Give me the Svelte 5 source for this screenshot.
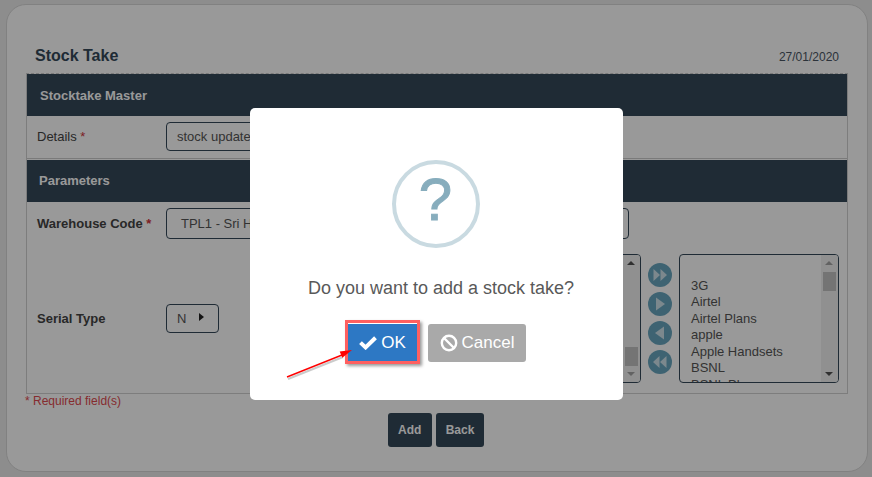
<script>
  const brands = ["3G", "Airtel", "Airtel Plans", "apple", "Apple Handsets", "BSNL", "BSNL Plans"];
  const moves = [
    "M5.5 6 L12 12 L5.5 18 Z M12.5 6 L19 12 L12.5 18 Z",
    "M8 5.5 L17 12 L8 18.5 Z",
    "M16 5.5 L7 12 L16 18.5 Z",
    "M18.5 6 L12 12 L18.5 18 Z M11.5 6 L5 12 L11.5 18 Z"
  ];
</script>

<div class="page">
  <div class="card">
    <div class="title-row">
      <h1>Stock Take</h1>
      <span class="date">27/01/2020</span>
    </div>

    <div class="form">
      <div class="section-head first">Stocktake Master</div>
      <div class="row details">
        <label for="details">Details <em>*</em></label>
        <div class="field wide" id="details">stock update</div>
      </div>

      <div class="section-head">Parameters</div>
      <div class="row warehouse">
        <label for="wh">Warehouse Code <em>*</em></label>
        <div class="field code" id="wh">TPL1 - Sri Hari</div>
      </div>
      <div class="row serial">
        <label for="serial">Serial Type</label>
        <div class="field small" id="serial">N<span class="caret"></span></div>
        <div class="picker">
          <div class="listbox left">
            <div class="scroll">
              <span class="up dark"></span>
              <span class="thumb low"></span>
              <span class="down"></span>
            </div>
          </div>
          <div class="moves">
            {#each moves as d}
              <svg width="24" height="24" viewBox="0 0 24 24">
                <circle cx="12" cy="12" r="12" fill="#68a6bf" />
                <path {d} fill="#cfe3ec" />
              </svg>
            {/each}
          </div>
          <div class="listbox right">
            <ul>
              {#each brands as b}
                <li>{b}</li>
              {/each}
            </ul>
            <div class="scroll">
              <span class="up"></span>
              <span class="thumb"></span>
              <span class="down dark"></span>
            </div>
          </div>
        </div>
      </div>
    </div>

    <p class="required">* Required field(s)</p>
    <div class="actions">
      <button type="button" class="add">Add</button>
      <button type="button">Back</button>
    </div>
  </div>

  <div class="overlay"></div>

  <div class="modal">
    <div class="q-icon">?</div>
    <p class="question">Do you want to add a stock take?</p>
    <div class="modal-actions">
      <span class="marked">
        <button type="button" class="ok">
          <svg class="check" width="18" height="14" viewBox="0 0 18 14">
            <path d="M1.5 6.6 L6.6 11.4 L16.5 1.8" fill="none" stroke="#fff" stroke-width="4" />
          </svg>
          OK
        </button>
      </span>
      <button type="button" class="cancel">
        <svg width="18" height="18" viewBox="0 0 18 18">
          <circle cx="9" cy="9" r="7.2" fill="none" stroke="#fff" stroke-width="2.4" />
          <path d="M4 4 L14 14" stroke="#fff" stroke-width="2.4" />
        </svg>
        Cancel
      </button>
    </div>
    <svg class="arrow" width="80" height="40" viewBox="0 0 80 40">
      <path d="M1 31 L56 9" stroke="#999" stroke-width="2" opacity="0.5" transform="translate(1 2)" />
      <path d="M1 31 L56 9" stroke="#f00" stroke-width="1.4" />
      <path d="M66 4 L53.7 5.4 L56.3 11.8 Z" fill="#f00" />
    </svg>
  </div>
</div>

<style>
  :global(body) {
    margin: 0;
    background: #ebebeb;
  }

  * {
    box-sizing: border-box;
  }

  .page {
    position: relative;
    width: 872px;
    height: 477px;
    padding: 4px 4px 5px 6px;
    overflow: hidden;
    font-family: "Liberation Sans", Arial, sans-serif;
    font-size: 12px;
    color: #333;
  }

  .card {
    height: 468px;
    background: #fff;
    border: 1px solid #d8d8d8;
    border-radius: 20px;
    padding: 0 19px;
  }

  .title-row {
    display: flex;
    justify-content: space-between;
    align-items: baseline;
    padding: 42px 9px 0 9px;
    height: 68px;
  }

  h1 {
    margin: 0;
    font-size: 16px;
    font-weight: bold;
    color: #344859;
  }

  .date {
    font-size: 12px;
    color: #4a5563;
  }

  .form {
    border: 1px solid #d0d0d0;
    border-top: 1px dashed #ccc;
    height: 321px;
  }

  .section-head {
    height: 42px;
    background: #344859;
    color: #fff;
    font-size: 13px;
    font-weight: bold;
    line-height: 41px;
    padding-left: 12px;
  }

  .section-head.first {
    padding-left: 13px;
    line-height: 43px;
  }

  .row {
    display: flex;
    align-items: center;
  }

  label {
    width: 139px;
    padding-left: 10px;
    font-weight: bold;
    font-size: 13px;
    color: #444;
    flex: none;
  }

  .details label {
    font-weight: normal;
  }

  em {
    color: #d0343a;
    font-style: normal;
  }

  .details {
    height: 43px;
    border-bottom: 1px solid #ccc;
    padding-bottom: 1px;
  }

  .details + .section-head {
    margin-top: 1px;
  }

  .warehouse {
    height: 42px;
  }

  .serial {
    height: 148px;
  }

  .field {
    border: 1px solid #344859;
    border-radius: 4px;
    background: #fff;
    color: #555;
    font-size: 13px;
    display: flex;
    align-items: center;
    flex: none;
  }

  .wide {
    width: 420px;
    height: 29px;
    padding-left: 10px;
  }

  .code {
    width: 463px;
    height: 31px;
    padding-left: 14px;
  }

  .small {
    width: 53px;
    height: 29px;
    padding-left: 10px;
  }

  .caret {
    margin: -2px 0 0 13px;
    border-left: 5px solid #222;
    border-top: 4px solid transparent;
    border-bottom: 4px solid transparent;
  }

  .picker {
    display: flex;
    align-items: center;
    margin-left: 206px;
  }

  .listbox {
    position: relative;
    height: 129px;
    border: 1px solid #344859;
    border-radius: 4px;
    background: #fff;
    overflow: hidden;
  }

  .left {
    width: 216px;
  }

  .right {
    width: 160px;
  }

  ul {
    margin: 0;
    padding: 23px 0 0 11px;
    list-style: none;
    font-size: 13px;
    line-height: 16.6px;
    color: #555;
  }

  .scroll {
    position: absolute;
    top: 0;
    right: 0;
    bottom: 0;
    width: 17px;
    background: #f1f1f1;
  }

  .thumb {
    position: absolute;
    left: 2px;
    top: 17px;
    width: 13px;
    height: 19px;
    background: #c1c1c1;
  }

  .thumb.low {
    top: 92px;
  }

  .up,
  .down {
    position: absolute;
    left: 4px;
    border-left: 4px solid transparent;
    border-right: 4px solid transparent;
  }

  .up {
    top: 6px;
    border-bottom: 4px solid #a3a3a3;
  }

  .down {
    bottom: 6px;
    border-top: 4px solid #a3a3a3;
  }

  .up.dark {
    border-bottom-color: #505050;
  }

  .down.dark {
    border-top-color: #505050;
  }

  .moves {
    width: 38px;
    display: flex;
    flex-direction: column;
    align-items: center;
    gap: 5px;
  }

  .moves svg {
    display: block;
    margin-left: -1px;
  }

  .required {
    margin: 0 0 0 -1px;
    height: 19px;
    font-size: 12px;
    line-height: 14px;
    color: #e04a4f;
  }

  .actions {
    display: flex;
    justify-content: center;
    gap: 4px;
    margin-right: 2px;
  }

  .actions button {
    height: 34px;
    padding: 0 10px;
    border: none;
    border-radius: 3px;
    background: #344859;
    color: #fff;
    font-family: inherit;
    font-size: 12px;
    font-weight: bold;
  }

  .actions .add {
    width: 44px;
    padding: 0;
  }

  .overlay {
    position: absolute;
    inset: 0;
    background: rgba(0, 0, 0, 0.4);
  }

  .modal {
    position: absolute;
    left: 250px;
    top: 108px;
    width: 373px;
    height: 292px;
    background: #fff;
    border-radius: 5px;
    display: flex;
    flex-direction: column;
    align-items: center;
    padding-top: 52px;
  }

  .q-icon {
    width: 88px;
    height: 88px;
    margin-left: -2px;
    border: 4px solid #c9dae1;
    border-radius: 50%;
    color: #87adbd;
    font-size: 60px;
    line-height: 71px;
    text-align: center;
    -webkit-text-stroke: 1px #87adbd;
  }

  .question {
    margin: 30px 0 0 9px;
    font-size: 18px;
    line-height: 20px;
    color: #595959;
  }

  .modal-actions {
    display: flex;
    align-items: flex-start;
    margin: 26px 0 0 -2px;
    gap: 8px;
  }

  .marked {
    display: block;
    height: 44px;
    margin-top: -4px;
    padding-top: 1px;
    border: 3px solid #ff6060;
    box-shadow: 2px 2px 3px rgba(0, 0, 0, 0.4);
  }

  .modal-actions button {
    display: flex;
    align-items: center;
    justify-content: center;
    gap: 4px;
    border: none;
    border-radius: 3px;
    color: #fff;
    font-family: inherit;
    font-size: 17px;
    padding: 0;
  }

  .marked .ok {
    width: 69px;
    height: 37px;
    background: #2d78c4;
    border-radius: 0;
  }

  .cancel {
    width: 98px;
    height: 38px;
    background: #a9a9a9;
  }

  .arrow {
    position: absolute;
    left: 36px;
    top: 238px;
  }
</style>
